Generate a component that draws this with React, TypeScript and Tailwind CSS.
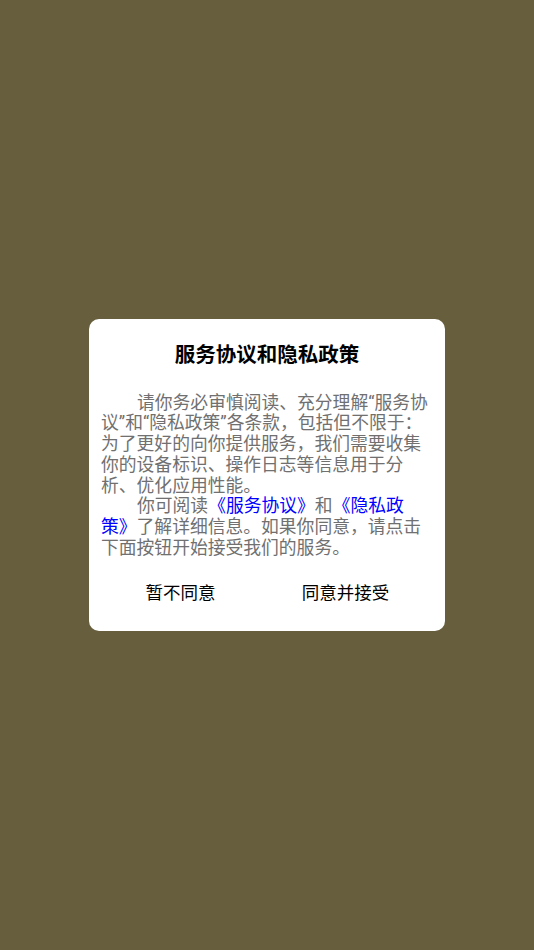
export default function App() {
  return (
    <div
      className="min-h-screen w-full bg-[#665e3c] flex items-center justify-center"
      style={{ fontFamily: 'Roboto, "Noto Sans CJK SC", sans-serif' }}
    >
      <div className="w-[356px] bg-white rounded-[10px] px-[14px] pt-[22px] pb-[16px]">
        <h2 className="text-center text-[20.5px] leading-[28px] font-bold text-black">
          服务协议和隐私政策
        </h2>

        <div className="mt-[24px] -ml-[2px] mr-[2px] text-[17.8px] leading-[20.7px] text-[#707070]">
          <p className="indent-[36px]">
            请你务必审慎阅读、充分理解“服务协议”和“隐私政策”各条款，包括但不限于：为了更好的向你提供服务，我们需要收集你的设备标识、操作日志等信息用于分析、优化应用性能。
          </p>
          <p className="indent-[36px]">
            你可阅读<span className="text-[#0000ff]">《服务协议》</span>和
            <span className="text-[#0000ff]">《隐私政策》</span>了解详细信息。如果你同意，请点击下面按钮开始接受我们的服务。
          </p>
        </div>

        <div className="mt-[13px] flex">
          <button className="flex-1 h-[44px] text-[17.5px] text-black pr-[10px]">暂不同意</button>
          <button className="flex-1 h-[44px] text-[17.5px] text-black pr-[8px]">同意并接受</button>
        </div>
      </div>
    </div>
  );
}
